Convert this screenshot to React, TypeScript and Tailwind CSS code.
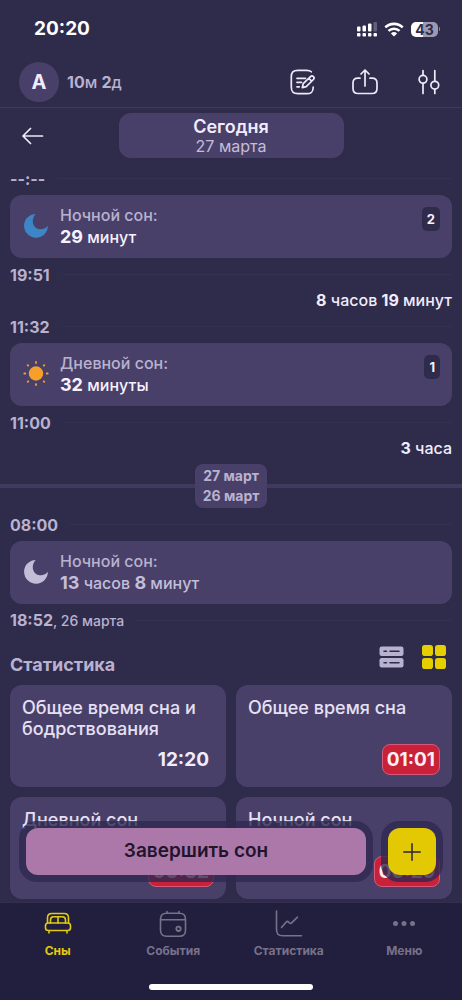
import React, { useState } from 'react';

const RED = 'bg-[#c92137] border-[#d4597a] text-[#fbeef5]';
const PLAIN = 'border-transparent text-[#f1ecfc]';

const stats = [
  { title: 'Общее время сна и бодрствования', value: '12:20', alert: false },
  { title: 'Общее время сна', value: '01:01', alert: true },
  { title: 'Дневной сон', value: '00:32', alert: true },
  { title: 'Ночной сон', value: '00:29', alert: true },
];

const Moon = ({ className }: { className: string }) => (
  <svg viewBox="0 0 26 26" className={`w-[26px] h-[26px] shrink-0 ${className}`} fill="currentColor">
    <path d="M12.600 .9C8 5.500 8.800 14.800 16.300 16.200c3.600.6 6.600-1 8.600-3.400A11.900 11.900 0 1 1 12.600 .9Z" />
  </svg>
);

const Sun = () => (
  <svg viewBox="0 0 26 26" className="w-[26px] h-[26px] shrink-0 text-[#f6a02b]">
    <circle cx="13" cy="12.500" r="7.200" fill="currentColor" />
    <path
      d="M13 .9v1M13 23.100v1M1.300 12.500h1M23.700 12.500h1M4.700 4.200l.5.500M20.800 20.300l.5.500M4.700 20.800l.5-.5M20.800 4.700l.5-.5"
      stroke="currentColor"
      strokeWidth="1.800"
      strokeLinecap="round"
    />
  </svg>
);

const StatusBar = () => (
  <div className="flex h-[58px] items-center justify-between pl-[34px] pr-[22px] text-white">
    <span className="text-[19px] font-bold leading-6">20:20</span>
    <div className="flex items-center gap-[7px]">
      <svg viewBox="0 0 20 16" className="h-4 w-5" fill="currentColor">
        <rect x="0" y="5.500" width="3.500" height="5" rx="1" />
        <rect x="5.500" y="4.500" width="3.500" height="6" rx="1" />
        <rect x="11" y="2.500" width="3.500" height="8" rx="1" />
        <rect x="16.500" y="1" width="3.500" height="9.500" rx="1" opacity=".25" />
        <rect x="0" y="12" width="3.500" height="3.500" rx="1" />
        <rect x="5.500" y="12" width="3.500" height="3.500" rx="1" />
        <rect x="11" y="12" width="3.500" height="3.500" rx="1" />
        <rect x="16.500" y="12" width="3.500" height="3.500" rx="1" />
      </svg>
      <svg viewBox="0 0 20 15" className="h-[15px] w-5" fill="none" stroke="currentColor" strokeWidth="2.600">
        <path d="M1.300 5.400a12.500 12.500 0 0 1 17.400 0" />
        <path d="M4.500 8.900a8 8 0 0 1 11 0" />
        <path d="M10 14.600 6.900 11.400a4.500 4.500 0 0 1 6.200 0Z" fill="currentColor" stroke="none" />
      </svg>
      <div className="flex items-center gap-px">
        <div className="h-[15px] w-[27px] rounded-[5px] bg-[linear-gradient(90deg,#fff_43%,#9d99ae_43%)] text-center text-[14px] font-bold leading-[15px] text-[#2f2b4b]">
          43
        </div>
        <div className="h-1 w-px rounded-r bg-[#8c88a0]" />
      </div>
    </div>
  </div>
);

const Header = () => (
  <header className="flex h-[50px] items-center justify-between border-b border-[#3f3a5b] pl-[19px] pr-[22px] pb-[2px]">
    <div className="flex items-center gap-2">
      <div className="flex h-10 w-10 items-center justify-center rounded-full bg-[#494069] text-[20px] leading-10 font-bold text-[#f1ecfc]">
        А
      </div>
      <span className="text-[16px] text-[#b9b2cf]">
        <b>10</b>м <b>2</b>д
      </span>
    </div>
    <div className="flex items-center text-[#efeafa]">
      <button aria-label="Заметки">
        <svg viewBox="0 0 26 26" className="h-[26px] w-[26px]" fill="none" stroke="currentColor" strokeWidth="1.700" strokeLinecap="round" strokeLinejoin="round">
          <path d="M21.300 2.800C20.300 1.700 18.800 1.300 16.500 1.300H8C3 1.300 1.300 3 1.300 8v10c0 5 1.700 6.700 6.700 6.700h8.500c5 0 6.700-1.700 6.700-6.500" />
          <path d="M7 9.300h8.500M7 13.300h4.500M7 17.800h2.200" />
          <path d="m12.300 18.600.9-3.900 7.300-7.100a2 2 0 0 1 2.900 2.900l-7.200 7.200ZM18.800 9.300l2.900 2.900" />
        </svg>
      </button>
      <button aria-label="Поделиться" className="ml-9">
        <svg viewBox="0 0 26 26" className="h-[26px] w-[26px]" fill="none" stroke="currentColor" strokeWidth="1.700" strokeLinecap="round" strokeLinejoin="round">
          <path d="M8 9.200H6C2.500 9.200 1 10.500 1 14v5.500c0 3.600 1.500 5 5 5h14c3.500 0 5-1.400 5-5V14c0-3.500-1.500-4.800-5-4.800h-2" />
          <path d="M13 17V1.200M9 5l4-4 4 4" />
        </svg>
      </button>
      <button aria-label="Фильтры" className="ml-10">
        <svg viewBox="0 0 22 26" className="h-[26px] w-[22px]" fill="none" stroke="currentColor" strokeWidth="1.700" strokeLinecap="round">
          <path d="M5 1.500V6M5 14.500v10M16.800 1.500v10.500M16.800 20.500v4" />
          <circle cx="5" cy="10.300" r="3.900" />
          <circle cx="16.800" cy="16.200" r="3.900" />
        </svg>
      </button>
    </div>
  </header>
);

const TimeRow = ({ time, date }: { time: string; date?: string }) => (
  <div className="flex h-[33px] items-center gap-3 text-[#b9b2cf]">
    <span className="text-[16px] leading-5">
      <b>{time}</b>
      {date && <span className="text-[14px]">, {date}</span>}
    </span>
    <div className="h-px flex-1 bg-[#353152]" />
  </div>
);

const Interval = ({ children }: { children: React.ReactNode }) => (
  <div className="h-[19px] text-right text-[16px] leading-[19px] text-[#f1ecfc]">{children}</div>
);

type SleepProps = {
  icon: React.ReactNode;
  title: string;
  count?: number;
  past?: boolean;
  children: React.ReactNode;
};

const SleepCard = ({ icon, title, count, past, children }: SleepProps) => (
  <div className="flex h-[63px] items-start gap-[11px] rounded-xl bg-[#494069] pl-[13px] pr-3">
    <div className="pt-[18px]">{icon}</div>
    <div className="flex-1 pt-[10px] text-[16px] leading-[21px]">
      <div className="text-[#b9b2cf]">{title}</div>
      <div className={past ? 'text-[#c4bdd8]' : 'text-[#f6f2ff]'}>{children}</div>
    </div>
    {count && (
      <span className="mt-3 rounded-[5px] bg-[#2f2b4b] px-[5px] text-[13px] font-bold leading-6 text-[#f6f2ff]">{count}</span>
    )}
  </div>
);

const tabs = [
  {
    label: 'Сны',
    icon: (
      <>
        <path d="M3.500 13V8c0-3 1.300-4.500 4.300-4.500h12.400c3 0 4.300 1.500 4.300 4.500v5" />
        <path d="M6.500 13v-3c0-2.300.9-3.300 3-3.300h9c2.100 0 3 1 3 3.300v3M14 6.700V13" />
        <rect x="1.500" y="13" width="25" height="7.500" rx="2.800" />
        <path d="M5 20.500V23M23 20.500V23" />
      </>
    ),
  },
  {
    label: 'События',
    icon: (
      <>
        <path d="M7.500 3.200h13c3.800 0 6 2 6 6v11c0 4-2.200 6-6 6h-13c-3.800 0-6-2-6-6v-11c0-4 2.200-6 6-6ZM1.500 9.800h25M8 1.500v1.700M20 1.500v1.700" />
        <circle cx="19.500" cy="18.800" r="2.200" strokeWidth="1.800" />
      </>
    ),
  },
  {
    label: 'Статистика',
    icon: (
      <>
        <path d="M1.500 1v18c0 5 1.500 6.700 6.500 6.700h18.500" />
        <path d="m6.500 17.500 4.500-5.300c1-1.100 1.800-1.100 2.700-.1l.5.600c.9 1 1.700 1 2.600 0L22.500 7.200" />
      </>
    ),
  },
  {
    label: 'Меню',
    icon: (
      <g fill="currentColor" stroke="none">
        <circle cx="5.500" cy="13.500" r="2.500" />
        <circle cx="14" cy="13.500" r="2.500" />
        <circle cx="22.500" cy="13.500" r="2.500" />
      </g>
    ),
  },
];

export default function App() {
  const [tab, setTab] = useState('Сны');
  const [grid, setGrid] = useState(true);

  return (
    <div className="flex h-screen flex-col bg-[#2f2b4b] font-['Inter','Noto_Sans',sans-serif] font-medium">
      <StatusBar />
      <Header />

      <div className="relative min-h-0 flex-1">
        <main className="h-full overflow-y-auto pb-1 [scrollbar-width:none]">
          {/* Day switcher */}
          <div className="grid grid-cols-[1fr_2fr_1fr] items-center px-[6px] pt-[5px]">
            <button aria-label="Назад" className="justify-self-start pl-4 text-[#efeafa]">
              <svg viewBox="0 0 22 18" className="h-[18px] w-[22px]" fill="none" stroke="currentColor" strokeWidth="1.700" strokeLinecap="round" strokeLinejoin="round">
                <path d="M20.500 9H1M8.500 1.500 1 9l7.500 7.500" />
              </svg>
            </button>
            <button className="h-[45px] rounded-xl bg-[#494069]">
              <div className="text-[18px] font-semibold leading-5 text-[#f1ecfc]">Сегодня</div>
              <div className="text-[16px] font-normal leading-[18px] text-[#c4bdd8]">27 марта</div>
            </button>
          </div>

          <div className="px-[10px] pt-1">
            <TimeRow time="--:--" />
            <SleepCard icon={<Moon className="text-[#3c86c8]" />} title="Ночной сон:" count={2}>
              <b className="text-[18px]">29</b> минут
            </SleepCard>
            <TimeRow time="19:51" />
            <Interval>
              <b>8</b> часов <b>19</b> минут
            </Interval>
            <TimeRow time="11:32" />
            <SleepCard icon={<Sun />} title="Дневной сон:" count={1}>
              <b className="text-[18px]">32</b> минуты
            </SleepCard>
            <TimeRow time="11:00" />
            <Interval>
              <b>3</b> часа
            </Interval>
          </div>

          {/* Border between two days */}
          <div className="mt-[6px] flex items-center">
            <div className="h-1 flex-1 bg-[#413a60]" />
            <div className="rounded-lg bg-[#494069] px-2 py-[2px] text-center text-[14px] font-bold leading-5 text-[#b9b2cf]">
              <div>27 март</div>
              <div>26 март</div>
            </div>
            <div className="h-1 flex-1 bg-[#413a60]" />
          </div>

          <div className="px-[10px]">
            <TimeRow time="08:00" />
            <SleepCard icon={<Moon className="text-[#c4bdd8]" />} title="Ночной сон:" past>
              <b className="text-[18px]">13</b> часов <b className="text-[18px]">8</b> минут
            </SleepCard>
            <TimeRow time="18:52" date="26 марта" />

            <div className="flex h-12 items-start justify-between pr-[6px] pt-2">
              <h2 className="pt-2 text-[18px] font-bold leading-6 text-[#b9b2cf]">Статистика</h2>
              <div className="flex gap-[18px]">
                <button aria-label="Список" onClick={() => setGrid(false)} className={grid ? 'text-[#b9b2cf]' : 'text-[#e6cf00]'}>
                  <svg viewBox="0 0 25 24" className="h-6 w-[25px]">
                    <rect x=".5" y="1.500" width="24" height="9.500" rx="2.200" fill="currentColor" />
                    <rect x=".5" y="13" width="24" height="9.500" rx="2.200" fill="currentColor" />
                    <path d="M5 6.200h2.500M11 6.200h9M5 17.800h2.500M11 17.800h9" stroke="#2f2b4b" strokeWidth="1.500" strokeLinecap="round" />
                  </svg>
                </button>
                <button aria-label="Плитка" onClick={() => setGrid(true)} className={grid ? 'text-[#e6cf00]' : 'text-[#b9b2cf]'}>
                  <svg viewBox="0 0 24 24" className="h-6 w-6" fill="currentColor">
                    <rect x="0" y="0" width="11" height="11" rx="2.800" />
                    <rect x="13" y="0" width="11" height="11" rx="2.800" />
                    <rect x="0" y="13" width="11" height="11" rx="2.800" />
                    <rect x="13" y="13" width="11" height="11" rx="2.800" />
                  </svg>
                </button>
              </div>
            </div>

            <div className={`grid gap-[10px] ${grid ? 'grid-cols-2' : 'grid-cols-1'}`}>
              {stats.map(s => (
                <div key={s.title} className="flex h-[102px] flex-col justify-between rounded-xl bg-[#494069] p-3">
                  <div className="text-[18px] leading-[21px] text-[#e6e0f5]">{s.title}</div>
                  <div className={`self-end rounded-lg border px-1 text-[19px] font-bold leading-[29px] ${s.alert ? RED : PLAIN}`}>
                    {s.value}
                  </div>
                </div>
              ))}
            </div>
          </div>
        </main>

        {/* Floating actions */}
        <div className="absolute inset-x-[19px] bottom-5 flex gap-2">
          <div className="flex-1 rounded-[18px] bg-[#2f2850]/80 p-[7px]">
            <button className="h-[47px] w-full rounded-xl bg-[#ac78a9] text-[19px] font-semibold text-[#21152c]">Завершить сон</button>
          </div>
          <div className="rounded-[18px] bg-[#2f2850]/80 p-[7px]">
            <button aria-label="Добавить" className="flex h-[47px] w-12 items-center justify-center rounded-xl bg-[#e2c904]">
              <svg viewBox="0 0 18 18" className="h-[18px] w-[18px]" fill="none" stroke="#2b2430" strokeWidth="1.500" strokeLinecap="round">
                <path d="M9 .8v16.400M.8 9h16.400" />
              </svg>
            </button>
          </div>
        </div>
      </div>

      <nav className="border-t border-[#332e50] bg-[#221e3d] pb-[10px]">
        <div className="flex pt-[7px]">
          {tabs.map(t => (
            <button
              key={t.label}
              onClick={() => setTab(t.label)}
              className={`flex flex-1 flex-col items-center gap-[3px] text-[12px] font-bold leading-5 ${
                tab === t.label ? 'text-[#e2cb10]' : 'text-[#77728a]'
              }`}
            >
              <svg viewBox="0 0 28 28" className="h-7 w-7" fill="none" stroke="currentColor" strokeWidth="1.600" strokeLinecap="round" strokeLinejoin="round">
                {t.icon}
              </svg>
              {t.label}
            </button>
          ))}
        </div>
        <div className="mx-auto mt-[23px] h-[6px] w-[164px] rounded-full bg-white" />
      </nav>
    </div>
  );
}
